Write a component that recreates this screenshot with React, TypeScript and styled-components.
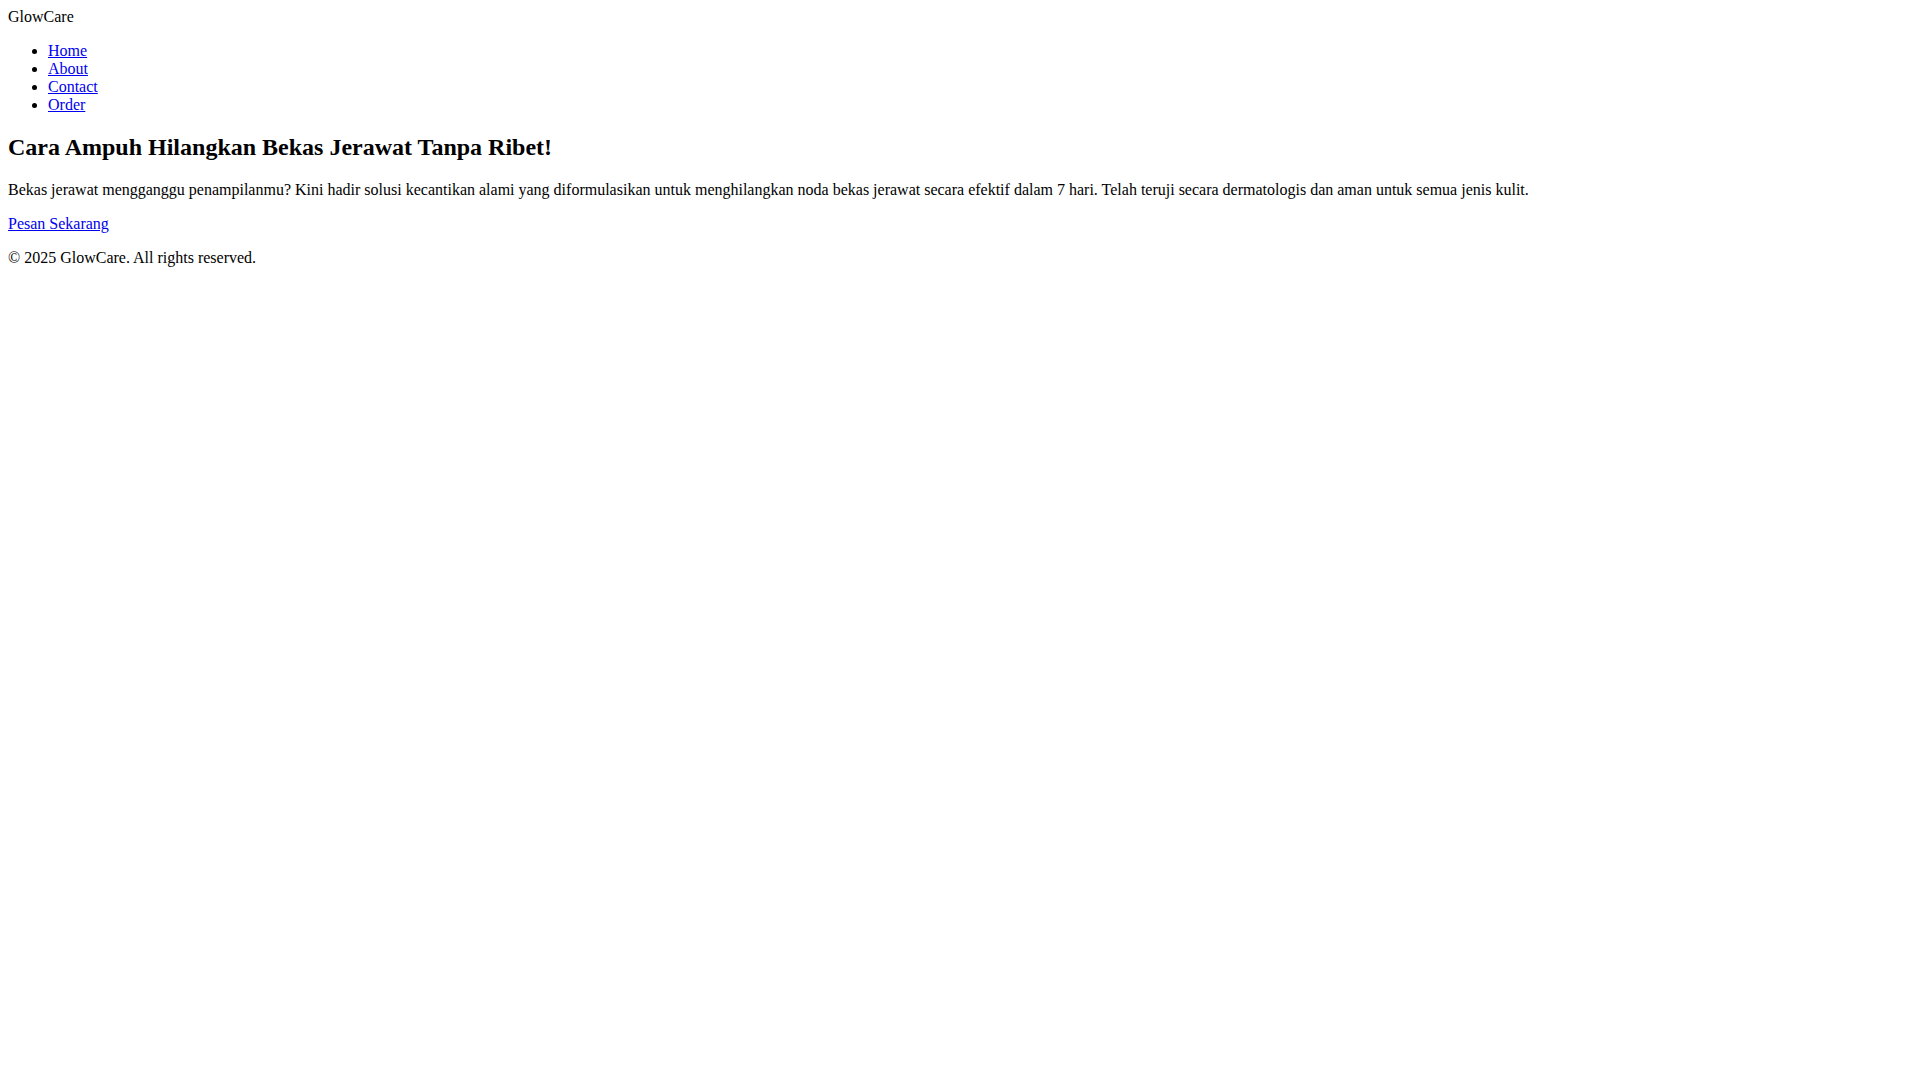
import React from 'react';
import styled, { createGlobalStyle } from 'styled-components';

const GlobalStyle = createGlobalStyle`
  body {
    margin: 8px;
    font-family: 'Liberation Serif', 'Times New Roman', serif;
    font-size: 16px;
    color: #000000;
    background: #ffffff;
  }
`;

const Header = styled.header`
  display: block;
`;

const Logo = styled.div`
  display: block;
`;

const Nav = styled.nav`
  display: block;
`;

const NavList = styled.ul`
  margin: 16px 0;
  padding-left: 40px;
  list-style: disc;
`;

const NavItem = styled.li`
  display: list-item;
`;

const Link = styled.a`
  color: #0000ee;
  text-decoration: underline;
  cursor: pointer;
`;

const Hero = styled.section`
  display: block;
`;

const Heading = styled.h2`
  font-size: 24px;
  font-weight: bold;
  margin: 19.92px 0;
`;

const Paragraph = styled.p`
  margin: 16px 0;
`;

const Footer = styled.footer`
  display: block;
`;

const navLinks = ['Home', 'About', 'Contact', 'Order'];

const App = () => {
  return (
    <>
      <GlobalStyle />
      <Header>
        <Logo>GlowCare</Logo>
        <Nav>
          <NavList>
            {navLinks.map(label => (
              <NavItem key={label}>
                <Link href={`#${label.toLowerCase()}`}>{label}</Link>
              </NavItem>
            ))}
          </NavList>
        </Nav>
      </Header>
      <Hero>
        <Heading>Cara Ampuh Hilangkan Bekas Jerawat Tanpa Ribet!</Heading>
        <Paragraph>
          Bekas jerawat mengganggu penampilanmu? Kini hadir solusi kecantikan alami yang
          diformulasikan untuk menghilangkan noda bekas jerawat secara efektif dalam 7 hari.
          Telah teruji secara dermatologis dan aman untuk semua jenis kulit.
        </Paragraph>
        <Link href="#order">Pesan Sekarang</Link>
      </Hero>
      <Footer>
        <Paragraph>© 2025 GlowCare. All rights reserved.</Paragraph>
      </Footer>
    </>
  );
};

export default App;
